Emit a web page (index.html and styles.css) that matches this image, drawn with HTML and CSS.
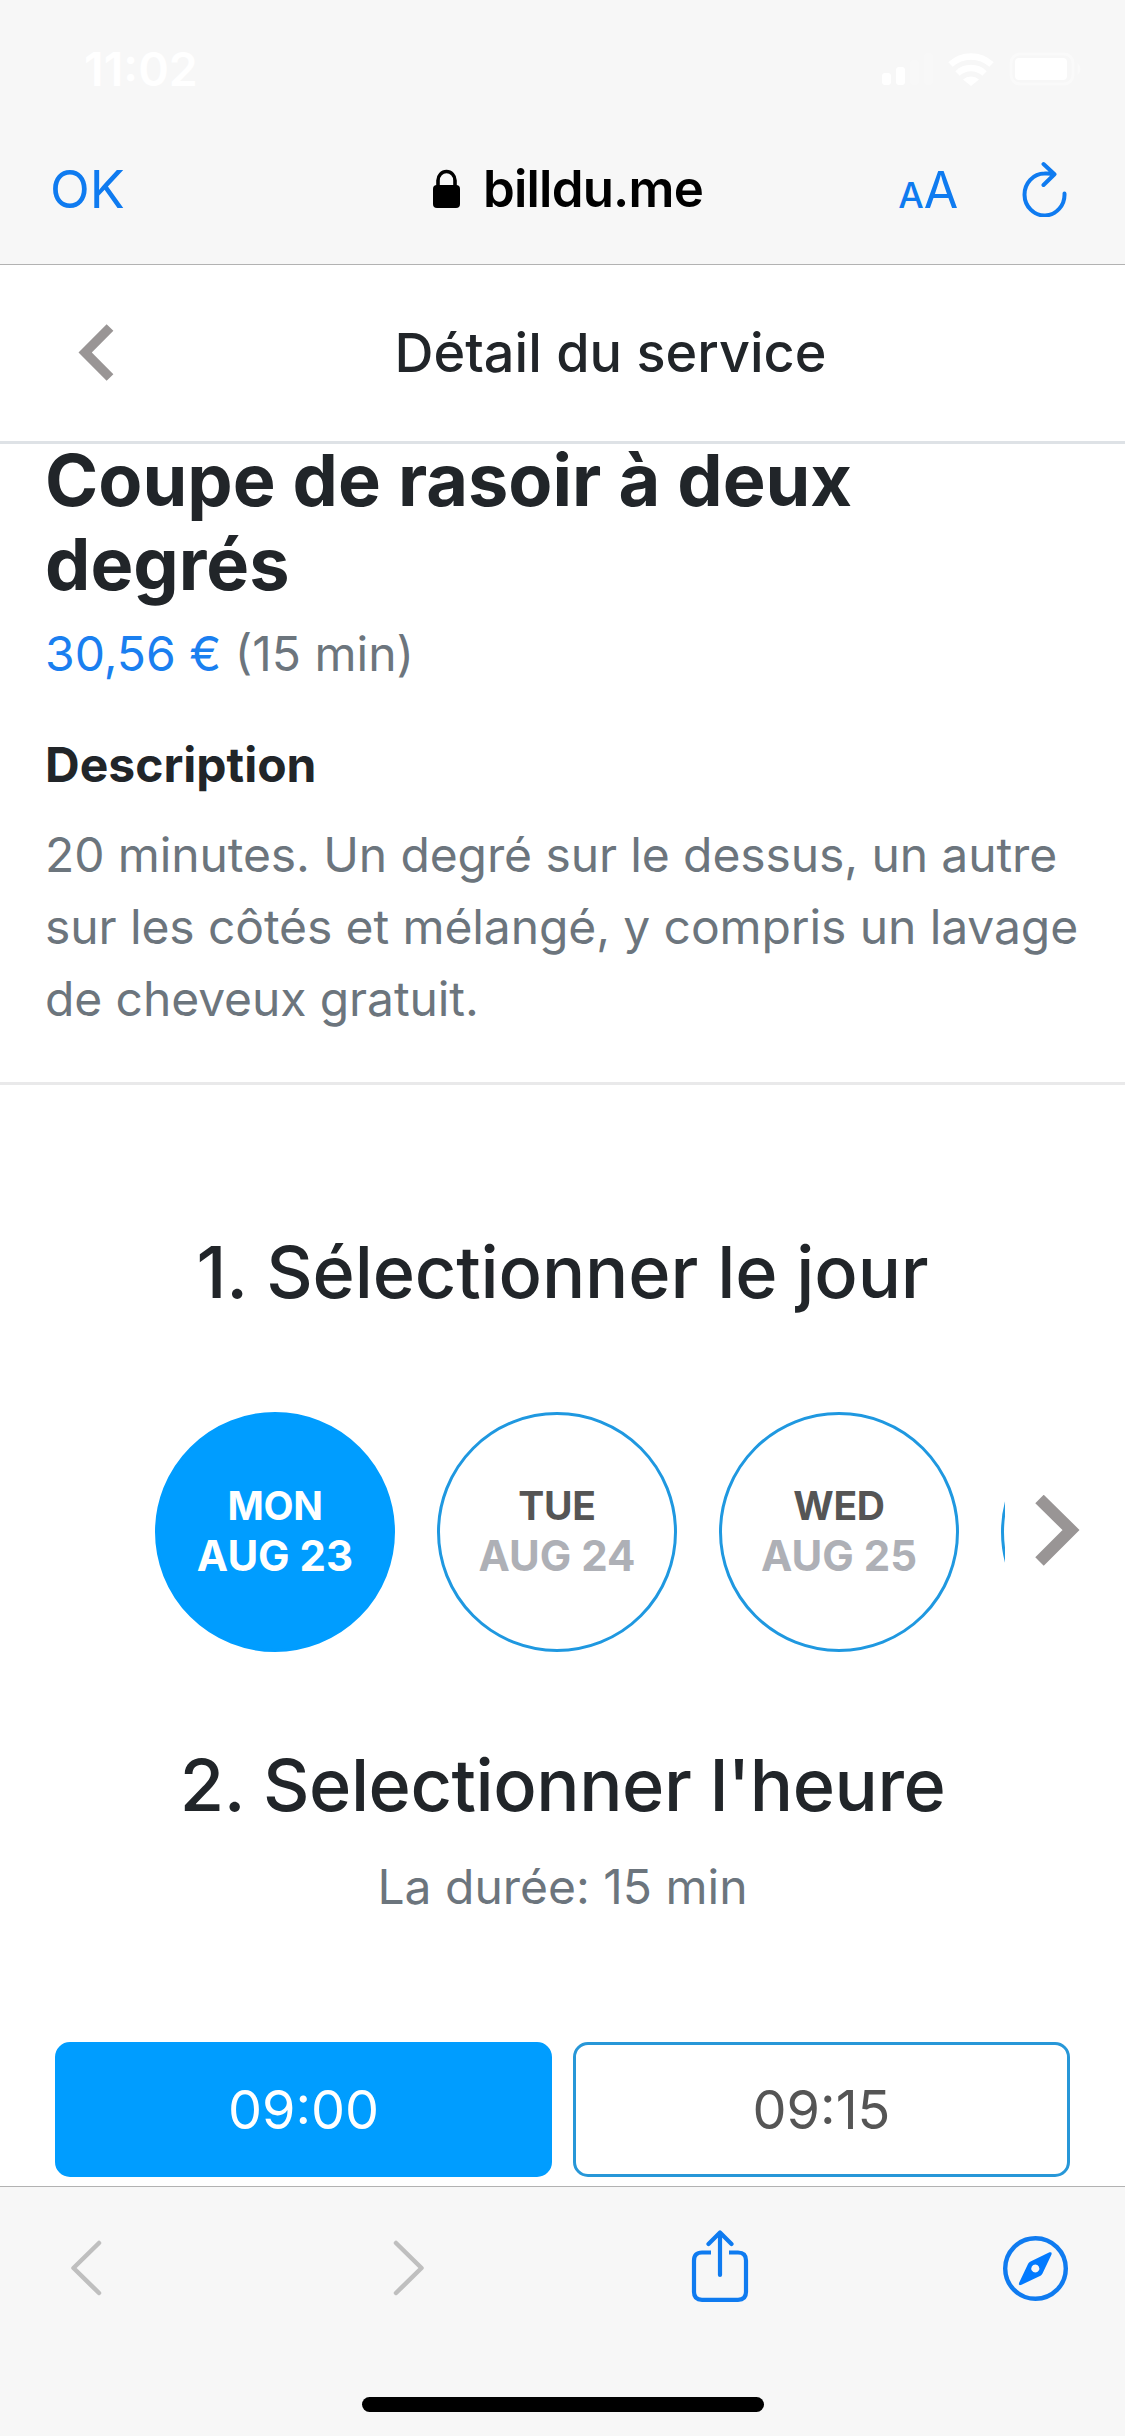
FILE: index.html
```html
<!DOCTYPE html>
<html lang="fr">
<head>
<meta charset="utf-8">
<title>Détail du service</title>
<link rel="stylesheet" href="styles.css">
</head>
<body>
<div class="screen">
  <header class="browser-top">
    <div class="status">
      <span class="clock">11:02</span>
      <svg class="status-icons" width="205" height="40" viewBox="0 0 205 40" fill="#fff">
        <rect x="2" y="23" width="9" height="12" rx="3"/>
        <rect x="16" y="17" width="9" height="18" rx="3"/>
        <rect x="30" y="10" width="9" height="25" rx="3" opacity=".15"/>
        <rect x="44" y="3" width="9" height="32" rx="3" opacity=".15"/>
        <path d="M83 29.500a12 12 0 0 1 16 0L91 36z" stroke="none"/>
        <path d="M77.500 23.500a19.500 19.500 0 0 1 27 0M70.500 14.500a30 30 0 0 1 41 0" fill="none" stroke="#fff" stroke-width="6.500"/>
        <rect x="131" y="4" width="62" height="30" rx="9" fill="none" stroke="#fff" stroke-width="3" opacity=".4"/>
        <rect x="135" y="8" width="52" height="22" rx="4"/>
        <path d="M197.500 13q6 6 0 12z" opacity=".4"/>
      </svg>
    </div>
    <nav class="address">
      <a class="ok">OK</a>
      <div class="host">
        <svg width="28" height="40" viewBox="0 0 28 40"><rect x="0" y="16" width="27" height="23" rx="4"/><path d="M5 18V11.500a8.500 9 0 0 1 17 0V18" fill="none" stroke="#000" stroke-width="3.600"/></svg>
        <span>billdu.me</span>
      </div>
      <div class="tools">
        <span class="text-size"><small>A</small>A</span>
        <svg width="48" height="56" viewBox="0 0 48 56" fill="none" stroke="#0f7bf0" stroke-width="4" stroke-linecap="round" stroke-linejoin="round"><path d="M43.500 32.500A20 21 0 1 1 23.500 12.500C27 12.300 30 12.500 33 13.200M22.500 3L33.500 13.200L22.500 24"/></svg>
      </div>
    </nav>
  </header>

  <main class="page">
    <div class="page-header">
      <svg class="back" width="36" height="58" viewBox="0 0 36 58" fill="none" stroke="#999595" stroke-width="9.500"><path d="M32 3.500L7.200 28.500L32 53.500"/></svg>
      <h1>Détail du service</h1>
    </div>

    <section class="service">
      <h2>Coupe de rasoir à deux degrés</h2>
      <p class="price"><span class="amount">30,56 €</span> <span class="length">(15 min)</span></p>
      <h3>Description</h3>
      <p class="about">20 minutes. Un degré sur le dessus, un autre sur les côtés et mélangé, y compris un lavage de cheveux gratuit.</p>
    </section>

    <section class="booking">
      <h2 class="step step-day">1. Sélectionner le jour</h2>
      <div class="days">
        <div class="track">
          <div class="day selected"><b>MON</b><span>AUG 23</span></div>
          <div class="day"><b>TUE</b><span>AUG 24</span></div>
          <div class="day"><b>WED</b><span>AUG 25</span></div>
          <div class="day"></div>
        </div>
        <svg class="next" width="46" height="74" viewBox="0 0 46 74" fill="none" stroke="#999595" stroke-width="12"><path d="M5.500 4L37 35L5.500 66.500"/></svg>
      </div>
      <h2 class="step step-hour">2. Selectionner l'heure</h2>
      <p class="duration">La durée: 15 min</p>
      <div class="slots">
        <div class="slot selected">09:00</div>
        <div class="slot">09:15</div>
      </div>
    </section>
  </main>

  <footer class="browser-bottom">
    <div class="toolbar">
      <svg width="34" height="74" viewBox="0 0 34 74" fill="none" stroke="#bfbfbf" stroke-width="4.500" stroke-linecap="round" stroke-linejoin="round"><path d="M30 13L4.500 38L30 63"/></svg>
      <svg width="34" height="74" viewBox="0 0 34 74" fill="none" stroke="#bfbfbf" stroke-width="4.500" stroke-linecap="round" stroke-linejoin="round"><path d="M4 13L29.500 38L4 63"/></svg>
      <svg width="58" height="74" viewBox="0 0 58 74" fill="none" stroke="#0f7bf0" stroke-width="4.200" stroke-linejoin="round"><path d="M20 22.500H11Q3 22.500 3 30.500V62Q3 69.800 11 69.800H47Q55 69.800 55 62V30.500Q55 22.500 47 22.500H38"/><path d="M29 45V3M17.500 14L29 2.500L40.500 14" stroke-linecap="round"/></svg>
      <svg width="66" height="74" viewBox="0 0 66 74"><circle cx="33.500" cy="38.500" r="30.300" fill="none" stroke="#0f7bf0" stroke-width="4.400"/><path fill="#027aff" fill-rule="evenodd" d="M47.500 22.300Q50.500 21.500 49.500 24.500L40.500 43.500Q39.800 45 38.500 45.800L19.500 54.800Q16 56 17 53L26 34Q26.700 32.500 28 31.800ZM33.300 34.500a4 4 0 1 0 .01 0Z"/></svg>
    </div>
    <div class="home"></div>
  </footer>
</div>
</body>
</html>
```
FILE: styles.css
```css
* { box-sizing: border-box; }
body, h1, h2, h3, p { margin: 0; }
body { font-family: Inter, "Liberation Sans", sans-serif; background: #fff; color: #212529; }
svg { display: block; flex: none; }

.screen { width: 1125px; height: 2436px; display: flex; flex-direction: column; overflow: hidden; }

.browser-top { height: 265px; flex: none; background: #f7f7f7; border-bottom: 1px solid #b2b2b2; }
.status { height: 132px; padding: 0 40px 0 84px; display: flex; justify-content: space-between; align-items: flex-start; color: #fff; }
.clock { font-size: 46.5px; font-weight: 600; line-height: 138px; }
.status-icons { margin-top: 50px; }
.address { height: 113px; padding: 0 56px 0 50px; display: grid; grid-template-columns: 383px auto 1fr; align-items: center; font-size: 51px; }
.ok { padding-top: 1px; color: #0f7bf0; font-size: 52px; }
.host { display: flex; align-items: center; gap: 22px; color: #000; font-weight: 600; letter-spacing: -0.8px; }
.tools { display: flex; justify-content: flex-end; align-items: center; gap: 63px; color: #0f7bf0; }
.text-size { padding-top: 2px; font-size: 50px; font-weight: 400; letter-spacing: -0.2px; }
.text-size small { font-size: 36px; font-weight: 500; }

.page { height: 1921px; flex: none; overflow: hidden; }
.page-header { height: 179px; padding: 0 18px 0 78px; display: grid; grid-template-columns: 36px 1fr; align-items: center; border-bottom: 3px solid #dee2e6; }
.page-header h1 { padding-bottom: 2px; font-size: 54px; font-weight: 450; text-align: center; }

.service { display: flow-root; height: 646px; margin-top: -5px; padding: 0 40px 0 45px; border-bottom: 3px solid #e9e9ea; }
.service h2 { font-size: 72px; font-weight: 700; line-height: 84px; margin-top: -1px; }
.service h3 { margin: 39px 0 18px; font-size: 48px; font-weight: 700; line-height: 72px; }
.price, .about, .duration { font-size: 48px; line-height: 72px; color: #6c757d; }
.price { margin-top: 12px; }
.about { letter-spacing: -0.1px; }
.amount { color: #1a7ff0; }

.booking { padding-top: 144px; }
.step { font-size: 72px; font-weight: 500; line-height: 86px; letter-spacing: -0.15px; text-align: center; }
.days { height: 240px; margin-top: 97px; padding-left: 155px; display: flex; align-items: center; gap: 29px; }
.track { width: 850px; display: flex; gap: 42px; overflow: hidden; }
.day { width: 240px; height: 240px; flex: none; padding-top: 66px; border: 3px solid #1f98e0; border-radius: 50%; text-align: center; color: #aeb0b6; font-size: 42px; font-weight: 700; line-height: 50px; }
.day b, .day span { display: block; }
.day b { font-size: 39px; font-weight: 700; letter-spacing: -0.3px; color: #555; }
.day.selected { background: #009dff; border-color: #009dff; color: #fff; }
.day.selected b { color: #fff; }
.step-hour { margin-top: 90px; letter-spacing: -0.45px; }
.duration { margin-top: 23px; text-align: center; }
.slots { margin-top: 119px; padding: 0 55px; display: grid; grid-template-columns: 1fr 1fr; gap: 21px; }
.slot { height: 135px; border: 3px solid #2797d8; border-radius: 15px; text-align: center; font-size: 54px; line-height: 129px; color: #555; }
.slot.selected { background: #009dff; border-color: #009dff; color: #fff; }

.browser-bottom { height: 250px; flex: none; background: #f7f7f7; border-top: 1px solid #b2b2b2; }
.toolbar { height: 210px; padding: 43px 57px 0 69px; display: grid; grid-template-columns: 323px 299px 311px 66px; align-items: start; }
.home { width: 402px; height: 15px; margin: 0 auto; border-radius: 8px; background: #000; }
```
